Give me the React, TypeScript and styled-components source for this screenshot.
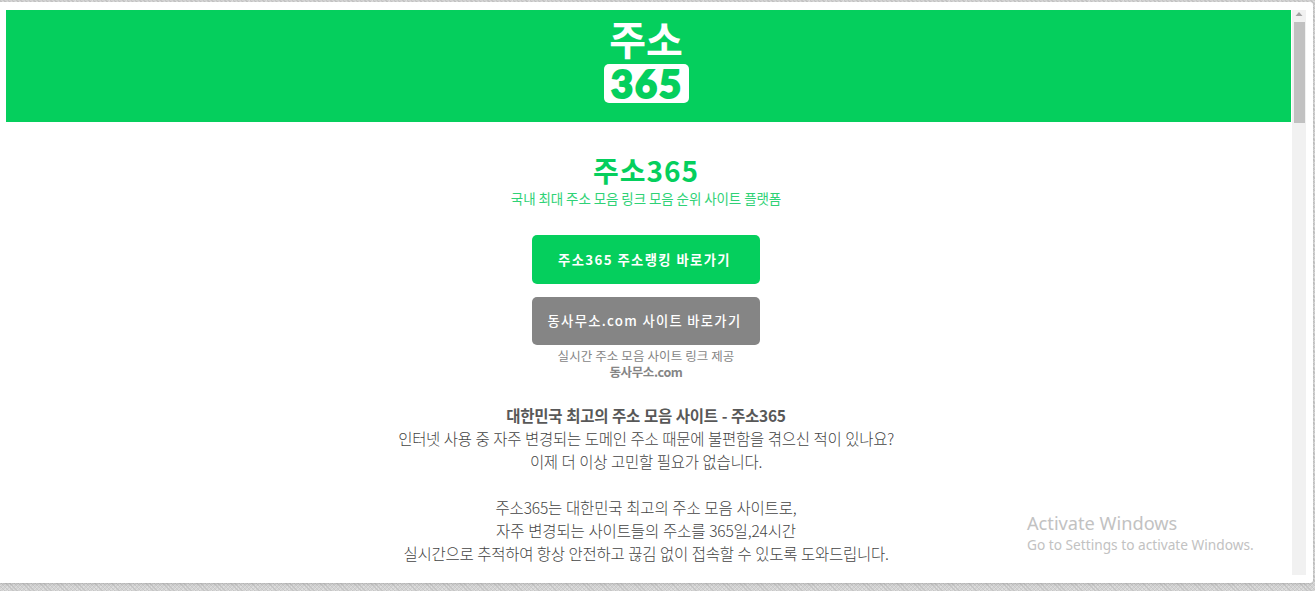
import React from "react";
import styled, { createGlobalStyle } from "styled-components";

type LineProps = {
  $spacing?: number;
  $bold?: boolean;
};

const intro = [
  { text: "대한민국 최고의 주소 모음 사이트 - 주소365", spacing: -0.25, bold: true },
  { text: "인터넷 사용 중 자주 변경되는 도메인 주소 때문에 불편함을 겪으신 적이 있나요?", spacing: -0.27 },
  { text: "이제 더 이상 고민할 필요가 없습니다.", spacing: -0.27 },
  { text: "", spacing: 0 },
  { text: "주소365는 대한민국 최고의 주소 모음 사이트로,", spacing: -0.17 },
  { text: "자주 변경되는 사이트들의 주소를 365일,24시간", spacing: -0.15 },
  { text: "실시간으로 추적하여 항상 안전하고 끊김 없이 접속할 수 있도록 도와드립니다.", spacing: -0.27 },
];

const App: React.FC = () => {
  return (
    <>
      <GlobalStyle />
      <Desktop>
        <Sheet>
          <Page>
            <Header>
              <LogoName>주소</LogoName>
              <LogoBadge>
                <span>365</span>
              </LogoBadge>
            </Header>
            <Content>
              <Title>주소365</Title>
              <Subtitle>국내 최대 주소 모음 링크 모음 순위 사이트 플랫폼</Subtitle>
              <LinkButton $color="#05cf5d" $height={49} $spacing={1.4}>
                주소365 주소랭킹 바로가기
              </LinkButton>
              <LinkButton $color="#858585" $height={48} $spacing={1.3}>
                동사무소.com 사이트 바로가기
              </LinkButton>
              <Caption $spacing={0.1}>실시간 주소 모음 사이트 링크 제공</Caption>
              <Caption $spacing={-0.4} $bold>
                동사무소.com
              </Caption>
              <Intro>
                {intro.map((line, index) => (
                  <IntroLine key={index} $spacing={line.spacing} $bold={line.bold}>
                    {line.text}
                  </IntroLine>
                ))}
              </Intro>
            </Content>
          </Page>
          <Scrollbar>
            <ScrollArrow viewBox="0 0 14 12">
              <path d="M3.5 6 7 2l3.5 4z" fill="#a3a3a3" />
            </ScrollArrow>
            <ScrollThumb />
          </Scrollbar>
        </Sheet>
        <Watermark>
          <WatermarkTitle>Activate Windows</WatermarkTitle>
          <WatermarkText>Go to Settings to activate Windows.</WatermarkText>
        </Watermark>
      </Desktop>
    </>
  );
};

const GlobalStyle = createGlobalStyle`
  * {
    box-sizing: border-box;
  }
  body {
    margin: 0;
    overflow: hidden;
    font-family: "Noto Sans CJK KR", sans-serif;
  }
`;

const Desktop = styled.div`
  width: 1315px;
  height: 591px;
  padding: 2px 2px 8px 0;
  overflow: hidden;
  background-color: #d2d2d2;
  background-image: repeating-linear-gradient(45deg, #c6c6c6 0 1px, transparent 1px 3px),
    repeating-linear-gradient(-45deg, #dedede 0 1px, transparent 1px 3px);
`;

const Sheet = styled.div`
  display: flex;
  height: 581px;
  padding: 8px 6px 8px 6px;
  border-radius: 0 3px 3px 0;
  background: #fff;
  box-shadow: 0 1px 3px rgba(0, 0, 0, 0.15);
`;

const Page = styled.main`
  width: 1285px;
  flex: none;
  overflow: hidden;
`;

const Header = styled.header`
  display: flex;
  flex-direction: column;
  align-items: center;
  height: 112px;
  padding: 9px 5px 0 0;
  background: #05cf5d;
`;

const LogoName = styled.div`
  height: 45px;
  color: #fff;
  font-size: 40px;
  font-weight: 700;
  line-height: 39px;
`;

const LogoBadge = styled.div`
  display: flex;
  justify-content: center;
  width: 85px;
  height: 39px;
  border-radius: 5px;
  background: #fff;
  color: #05cf5d;
  font-family: Lato, sans-serif;
  font-size: 38px;
  font-weight: 900;
  letter-spacing: 2px;
  line-height: 39px;
  text-indent: 2px;
  -webkit-text-stroke: 2px #05cf5d;
`;

const Content = styled.section`
  display: flex;
  flex-direction: column;
  align-items: center;
  padding: 31px 5px 0 0;
  white-space: nowrap;
`;

const Title = styled.h1`
  margin: 0;
  color: #05cf5d;
  font-size: 28px;
  font-weight: 700;
  letter-spacing: 1px;
  line-height: 34px;
`;

const Subtitle = styled.div`
  margin: 1px 0 27px;
  color: #2fd276;
  font-size: 13.5px;
  letter-spacing: -0.08px;
  line-height: 20px;
`;

const LinkButton = styled.a<{ $color: string; $height: number; $spacing: number }>`
  display: flex;
  align-items: center;
  justify-content: center;
  width: 228px;
  height: ${(props) => props.$height}px;
  padding-right: 3px;
  border-radius: 5px;
  background: ${(props) => props.$color};
  color: #fff;
  font-size: 13.3px;
  font-weight: 700;
  letter-spacing: ${(props) => props.$spacing}px;

  & + & {
    margin: 13px 0 3px;
    padding: 0 3px 2px 0;
    font-weight: 500;
  }
`;

const Caption = styled.div<LineProps>`
  color: #858585;
  font-size: 12.5px;
  font-weight: ${(props) => (props.$bold ? 700 : 400)};
  letter-spacing: ${(props) => props.$spacing ?? 0}px;
  line-height: 16px;
`;

const Intro = styled.div`
  margin-top: 24px;
  text-align: center;
`;

const IntroLine = styled.div<LineProps>`
  height: 23px;
  color: ${(props) => (props.$bold ? "#585858" : "#444")};
  font-size: 15.5px;
  font-weight: ${(props) => (props.$bold ? 700 : 300)};
  letter-spacing: ${(props) => props.$spacing ?? 0}px;
  line-height: 22px;
  word-spacing: 0.6px;
`;

const Scrollbar = styled.div`
  display: flex;
  flex-direction: column;
  align-items: center;
  width: 14px;
  height: 565px;
  margin-left: 1px;
  background: #f1f1f1;
`;

const ScrollArrow = styled.svg`
  width: 14px;
  height: 12px;
  flex: none;
`;

const ScrollThumb = styled.div`
  width: 11px;
  height: 101px;
  background: #c1c1c1;
`;

/* sits over the page like the system overlay */
const Watermark = styled.div`
  position: absolute;
  top: 511px;
  left: 1027px;
  color: #c2c2c2;
  font-family: "Noto Sans", sans-serif;
  white-space: nowrap;
`;

const WatermarkTitle = styled.div`
  font-size: 18.2px;
  line-height: 24px;
`;

const WatermarkText = styled.div`
  font-size: 13.7px;
  line-height: 20px;
`;

export default App;
